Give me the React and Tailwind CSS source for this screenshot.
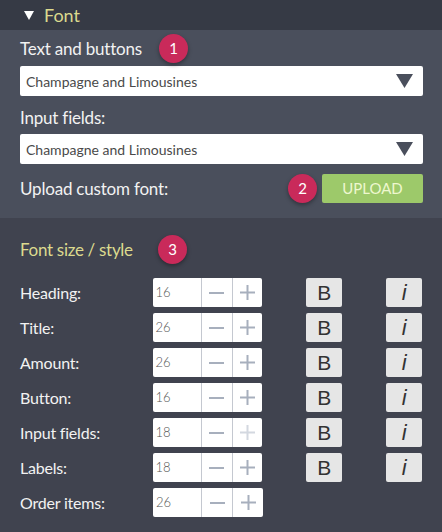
import React from "react";

const font = { fontFamily: "Lato, 'Liberation Sans', sans-serif" };

const Badge = ({ n }) => (
  <div className="w-[29px] h-[29px] rounded-full bg-[#c92a5a] text-white text-[15px] flex items-center justify-center shadow-[0_2px_4px_rgba(0,0,0,0.35)]">
    {n}
  </div>
);

const Select = ({ value }) => (
  <div className="h-[30px] bg-white rounded-[2px] flex items-center justify-between pl-[6px] pr-[10px]">
    <span className="text-[14px] text-[#4a4a4a]">{value}</span>
    <svg width="17" height="14" viewBox="0 0 17 14">
      <polygon points="0,0 17,0 8.5,14" fill="#4a4f5c" />
    </svg>
  </div>
);

const Stepper = ({ value, plusDisabled }) => (
  <div className="w-[110px] h-[29px] bg-white rounded-[2px] flex">
    <div className="w-[49px] flex items-center pl-[3px] text-[13px] font-light text-[#555] border-r border-[#c4c8d0]">{value}</div>
    <div className="w-[31px] flex items-center justify-center border-r border-[#c4c8d0]">
      <svg width="15" height="2" viewBox="0 0 15 2">
        <rect width="15" height="2" fill="#a7afbd" />
      </svg>
    </div>
    <div className="flex-1 flex items-center justify-center">
      <svg width="15" height="15" viewBox="0 0 15 15">
        <rect x="0" y="6.5" width="15" height="2" fill={plusDisabled ? "#d3d8e0" : "#a7afbd"} />
        <rect x="6.5" y="0" width="2" height="15" fill={plusDisabled ? "#d3d8e0" : "#a7afbd"} />
      </svg>
    </div>
  </div>
);

const rows = [
  { label: "Heading:", value: 16, style: true },
  { label: "Title:", value: 26, style: true },
  { label: "Amount:", value: 26, style: true },
  { label: "Button:", value: 16, style: true },
  { label: "Input fields:", value: 18, style: true, plusDisabled: true },
  { label: "Labels:", value: 18, style: true },
  { label: "Order items:", value: 26 },
];

export default function App() {
  return (
    <div className="w-[442px] h-[532px] bg-[#40434f] text-[#f2f2f2] overflow-hidden" style={font}>
      {/* Header */}
      <div className="h-[30px] bg-[#363a45] flex items-center pl-[24px]">
        <svg width="10" height="9" viewBox="0 0 10 9" className="mr-[10px]">
          <polygon points="0,0 10,0 5,9" fill="#ffffff" />
        </svg>
        <span className="text-[18px] text-[#dcda8e]">Font</span>
      </div>

      {/* Font section */}
      <div className="bg-[#4a4f5c] px-[20px] pt-[4px] pb-[15px]">
        <div className="h-[29px] flex items-center">
          <span className="w-[139px] text-[17px] tracking-[-0.2px]">Text and buttons</span>
          <Badge n="1" />
        </div>
        <div className="mt-[3px] mr-[-1px]">
          <Select value="Champagne and Limousines" />
        </div>
        <div className="h-[28px] mt-[8px] flex items-center text-[17px] tracking-[-0.2px]">Input fields:</div>
        <div className="mt-[2px] mr-[-1px]">
          <Select value="Champagne and Limousines" />
        </div>
        <div className="h-[29px] mt-[10px] flex items-center justify-between mr-[-1px]">
          <span className="text-[17px] tracking-[-0.2px]">Upload custom font:</span>
          <div className="flex items-center gap-[5px]">
            <Badge n="2" />
            <div className="w-[101px] h-[29px] bg-[#9dc96a] rounded-[2px] flex items-center justify-center text-[15px] text-[#edf7cf]">
              UPLOAD
            </div>
          </div>
        </div>
      </div>

      {/* Font size / style */}
      <div className="px-[20px] pt-[17px]">
        <div className="h-[29px] flex items-center">
          <span className="w-[138px] text-[17px] tracking-[-0.3px] text-[#dcda8e]">Font size / style</span>
          <Badge n="3" />
        </div>
        <div className="mt-[14px] flex flex-col gap-[6px]">
          {rows.map((r) => (
            <div key={r.label} className="h-[29px] flex items-center">
              <span className="w-[133px] text-[16px] tracking-[-0.2px]">{r.label}</span>
              <Stepper value={r.value} plusDisabled={r.plusDisabled} />
              {r.style && (
                <>
                  <div className="ml-[44px] w-[36px] h-[29px] bg-[#e6e6e6] rounded-[2px] flex items-center justify-center text-[21px] text-[#333]" style={{ fontFamily: "'Liberation Sans', sans-serif" }}>
                    B
                  </div>
                  <div className="ml-[44px] w-[36px] h-[29px] bg-[#e6e6e6] rounded-[2px] flex items-center justify-center text-[22px] italic text-[#333]" style={{ fontFamily: "'Liberation Sans', sans-serif" }}>
                    i
                  </div>
                </>
              )}
            </div>
          ))}
        </div>
      </div>
    </div>
  );
}
